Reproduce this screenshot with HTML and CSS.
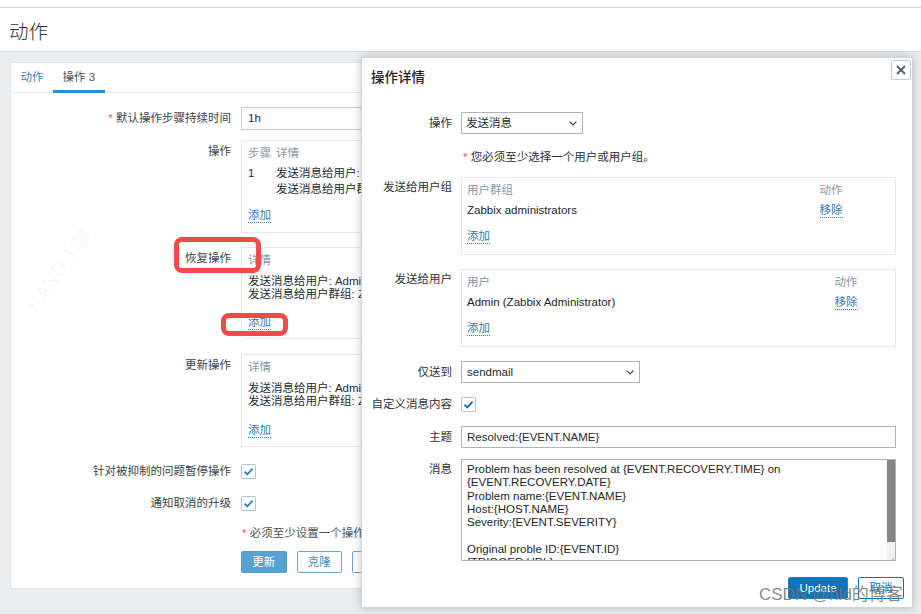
FILE: index.html
```html
<!DOCTYPE html>
<html lang="zh">
<head>
<meta charset="utf-8">
<title>动作</title>
<link rel="stylesheet" href="styles.css">
</head>
<body>
<div class="topbar"></div>
<header class="page-header"><h1>动作</h1></header>
<main class="content">
  <section class="panel">
    <nav class="tabs">
      <span class="tab">动作</span>
      <span class="tab active">操作 3</span>
    </nav>
    <div class="form">
      <div class="row r-input">
        <div class="label lbl-input"><span class="req">*</span> 默认操作步骤持续时间</div>
        <div class="field"><div class="input wide">1h</div></div>
      </div>
      <div class="row r-box1">
        <div class="label lbl-box">操作</div>
        <div class="field">
          <div class="box ops">
            <div class="thead"><span class="c-step">步骤</span><span>详情</span></div>
            <div class="trow ops-row"><span class="c-step">1</span>
              <div class="lines"><div>发送消息给用户: Admin (Zabbix Administrator) 通过 sendmail</div><div>发送消息给用户群组: Zabbix administrators 通过 sendmail</div></div>
            </div>
            <a class="link">添加</a>
          </div>
        </div>
      </div>
      <div class="row r-box2">
        <div class="label lbl-box">恢复操作</div>
        <div class="field">
          <div class="box rec">
            <div class="thead"><span>详情</span></div>
            <div class="lines tight"><div>发送消息给用户: Admin (Zabbix Administrator) 通过 sendmail</div><div>发送消息给用户群组: Zabbix administrators 通过 sendmail</div></div>
            <a class="link">添加</a>
          </div>
        </div>
      </div>
      <div class="row r-box3">
        <div class="label lbl-box">更新操作</div>
        <div class="field">
          <div class="box rec">
            <div class="thead"><span>详情</span></div>
            <div class="lines tight"><div>发送消息给用户: Admin (Zabbix Administrator) 通过 sendmail</div><div>发送消息给用户群组: Zabbix administrators 通过 sendmail</div></div>
            <a class="link">添加</a>
          </div>
        </div>
      </div>
      <div class="row r-cb1">
        <div class="label">针对被抑制的问题暂停操作</div>
        <div class="field"><span class="checkbox"><svg width="15" height="15" viewBox="0 0 15 15"><path d="M3.5 7.6 L6.3 10.3 L11.6 4.6" fill="none" stroke="#2f86c4" stroke-width="1.9"/></svg></span></div>
      </div>
      <div class="row r-cb2">
        <div class="label">通知取消的升级</div>
        <div class="field"><span class="checkbox"><svg width="15" height="15" viewBox="0 0 15 15"><path d="M3.5 7.6 L6.3 10.3 L11.6 4.6" fill="none" stroke="#2f86c4" stroke-width="1.9"/></svg></span></div>
      </div>
      <div class="row r-note">
        <div class="label"></div>
        <div class="field note"><span class="req">*</span> 必须至少设置一个操作。</div>
      </div>
      <div class="row r-btns">
        <div class="label"></div>
        <div class="field buttons">
          <span class="btn primary">更新</span>
          <span class="btn secondary">克隆</span>
          <span class="btn secondary">删除</span>
        </div>
      </div>
    </div>
  </section>
</main>

<div class="mark mark1">HAND-189</div>

<div class="annot annot1"></div>
<div class="annot annot2"></div>

<div class="modal">
  <div class="modal-head">操作详情</div>
  <span class="close"><svg width="20" height="20" viewBox="0 0 20 20"><path d="M6 6 L14 14 M14 6 L6 14" stroke="#5b6366" stroke-width="2" fill="none"/></svg></span>
  <div class="modal-body">
    <div class="mrow m-op">
      <div class="mlabel mid">操作</div>
      <div class="mfield">
        <div class="select s-op"><span>发送消息</span><svg width="8" height="5" viewBox="0 0 8 5"><polyline points="0.6,0.6 4,4 7.4,0.6" fill="none" stroke="#3a3f42" stroke-width="1.2"/></svg></div>
      </div>
    </div>
    <div class="mrow m-hint">
      <div class="mlabel"></div>
      <div class="mfield"><span class="req">*</span> 您必须至少选择一个用户或用户组。</div>
    </div>
    <div class="mrow m-box">
      <div class="mlabel top">发送给用户组</div>
      <div class="mfield">
        <div class="mbox">
          <div class="mhead"><span class="name">用户群组</span><span class="act">动作</span></div>
          <div class="mline"><span class="name">Zabbix administrators</span><span class="act"><a class="link">移除</a></span></div>
          <a class="link">添加</a>
        </div>
      </div>
    </div>
    <div class="mrow m-box">
      <div class="mlabel top">发送给用户</div>
      <div class="mfield">
        <div class="mbox">
          <div class="mhead"><span class="name">用户</span><span class="act narrow">动作</span></div>
          <div class="mline"><span class="name">Admin (Zabbix Administrator)</span><span class="act narrow"><a class="link">移除</a></span></div>
          <a class="link">添加</a>
        </div>
      </div>
    </div>
    <div class="mrow m-sel">
      <div class="mlabel mid">仅送到</div>
      <div class="mfield">
        <div class="select s-mail"><span>sendmail</span><svg width="8" height="5" viewBox="0 0 8 5"><polyline points="0.6,0.6 4,4 7.4,0.6" fill="none" stroke="#3a3f42" stroke-width="1.2"/></svg></div>
      </div>
    </div>
    <div class="mrow m-cb">
      <div class="mlabel cb">自定义消息内容</div>
      <div class="mfield"><span class="checkbox"><svg width="15" height="15" viewBox="0 0 15 15"><path d="M3.5 7.6 L6.3 10.3 L11.6 4.6" fill="none" stroke="#0b6fae" stroke-width="1.9"/></svg></span></div>
    </div>
    <div class="mrow m-subj">
      <div class="mlabel mid">主题</div>
      <div class="mfield"><div class="input full">Resolved:{EVENT.NAME}</div></div>
    </div>
    <div class="mrow m-msg">
      <div class="mlabel top">消息</div>
      <div class="mfield">
        <div class="textarea"><div class="ta-text">Problem has been resolved at {EVENT.RECOVERY.TIME} on
{EVENT.RECOVERY.DATE}
Problem name:{EVENT.NAME}
Host:{HOST.NAME}
Severity:{EVENT.SEVERITY}

Original proble ID:{EVENT.ID}
{TRIGGER.URL}</div>
          <div class="scrollbar"><div class="thumb"></div><div class="grip"><svg width="8" height="8" viewBox="0 0 8 8"><path d="M7 2 L2 7 M7 5 L5 7" stroke="#9a9a9a" stroke-width="0.8"/></svg></div></div>
        </div>
      </div>
    </div>
  </div>
  <div class="modal-foot">
    <span class="btn mprimary">Update</span>
    <span class="btn msecondary">取消</span>
  </div>
</div>

<div class="csdn">CSDN @hld的博客</div>
</body>
</html>
```

FILE: styles.css
```css
* { box-sizing: border-box; }
html, body { margin: 0; padding: 0; }
body {
  width: 921px;
  height: 614px;
  overflow: hidden;
  position: relative;
  background: #ebeef0;
  font-family: "Liberation Sans", Arial, "Noto Sans CJK SC", sans-serif;
  font-size: 11.5px;
  line-height: 16px;
  color: #1f2c33;
}
.topbar { height: 8px; background: #fff; border-bottom: 1px solid #d4d7d9; }
.page-header {
  height: 44px;
  background: #fff;
  border-bottom: 1px solid #d8dbdd;
  display: flex;
  align-items: center;
  padding: 2px 0 0 9px;
}
.page-header h1 {
  margin: 0;
  font-family: "Noto Sans CJK SC", sans-serif;
  font-size: 19.5px;
  font-weight: 300;
  color: #2a3236;
  line-height: 24px;
}
.content { padding: 10px 0 0 10px; }
.panel {
  width: 901px;
  height: 527px;
  background: #fff;
  border: 1px solid #e1e5e7;
}
.tabs {
  height: 30px;
  display: flex;
  border-bottom: 1px solid #e6eaec;
}
.tab {
  padding: 0 9.5px;
  line-height: 29px;
  color: #3d7fb3;
  height: 30px;
}
.tab.active {
  color: #4a5257;
  border-bottom: 3px solid #2f8fcf;
  line-height: 29px;
}
.form { padding-top: 14px; }
.row { display: flex; }
.label {
  width: 220px;
  flex: none;
  text-align: right;
  color: #3b4347;
}
.field {
  margin-left: 10px;
  flex: none;
  width: 128px;
  overflow: hidden;
  white-space: nowrap;
}
.lbl-input { padding-top: 3px; }
.lbl-box { padding-top: 3px; }
.req { color: #e66060; }
.r-input { margin-bottom: 10px; }
.r-box1 { margin-bottom: 14px; }
.r-box2 { margin-bottom: 15px; }
.r-box3 { margin-bottom: 17px; }
.r-cb1 { margin-bottom: 17px; align-items: center; height: 15px; }
.r-cb2 { margin-bottom: 14px; align-items: center; height: 15px; }
.r-note { margin-bottom: 10px; }
.note { color: #4a5257; padding-left: 1px; }
.input {
  height: 23px;
  border: 1px solid #bfcad0;
  padding: 0 6px;
  line-height: 21px;
  background: #fff;
  white-space: nowrap;
}
.input.wide { width: 660px; }
.box {
  width: 660px;
  border: 1px solid #e4e8ea;
  padding: 4px 6px 9px 6px;
  white-space: nowrap;
}
.box.rec { padding-bottom: 8px; }
.thead { color: #8797a0; display: flex; height: 16px; }
.c-step { width: 28px; flex: none; }
.trow { display: flex; }
.ops-row { margin-top: 4px; margin-bottom: 10px; }
.lines { color: #252c30; }
.lines.tight { line-height: 13.4px; margin-top: 6.5px; margin-bottom: 13px; }
.link {
  color: #3179b3;
  display: inline-block;
  line-height: 14px;
  border-bottom: 1px dotted #3179b3;
  height: 16px;
  padding-top: 1px;
}
.checkbox {
  display: block;
  width: 15px;
  height: 15px;
  border: 1px solid #b8c4ca;
  background: #fff;
  border-radius: 1px;
  position: relative;
}
.checkbox svg { position: absolute; left: -1px; top: -1px; }
.buttons { display: flex; gap: 10px; height: 23px; }
.btn {
  display: inline-flex;
  align-items: center;
  justify-content: center;
  height: 22.5px;
  width: 45.5px;
  flex: none;
  border-radius: 2px;
  font-size: 11.5px;
}
.btn.primary { background: #57a2d4; color: #fff; border: 1px solid #4f9bcd; }
.btn.secondary { background: #fff; color: #3f89c2; border: 1px solid #6aa6d2; }

/* watermark */
.mark {
  position: absolute;
  font-size: 20px;
  color: rgba(0, 0, 0, 0.04);
  transform: rotate(-55deg);
  white-space: nowrap;
  font-family: "Liberation Sans", sans-serif;
}
.mark1 { left: 10px; top: 262px; }

/* annotations */
.annot {
  position: absolute;
  border: 5px solid #f04a4a;
  border-radius: 8px;
}
.annot1 { left: 174px; top: 237px; width: 87px; height: 36px; }
.annot2 { left: 221px; top: 312.5px; width: 67px; height: 23px; }

/* modal */
.modal {
  position: absolute;
  left: 361px;
  top: 57px;
  width: 552px;
  height: 551px;
  background: #fff;
  border: 1px solid #cdd4d8;
  box-shadow: 0 0 9px rgba(0, 0, 0, 0.22);
  display: flex;
  flex-direction: column;
}
.modal-head {
  height: 40px;
  display: flex;
  align-items: center;
  padding-left: 9px;
  font-size: 13.5px;
  color: #1f2528;
  font-weight: 500;
  flex: none;
}
.close {
  position: absolute;
  top: 2px;
  right: 1px;
  width: 20px;
  height: 20px;
  border: 1px solid #b6cfe2;
  border-radius: 2px;
  background: #fff;
  display: block;
}
.close svg { position: absolute; left: -1px; top: -1px; }
.modal-body { padding-top: 14px; flex: 1; }
.mrow { display: flex; }
.mlabel {
  width: 90px;
  flex: none;
  text-align: right;
  color: #2b3236;
  white-space: nowrap;
}
.mlabel.mid { line-height: 22px; }
.mlabel.top { padding-top: 2px; }
.mlabel.cb { line-height: 15px; }
.mfield { margin-left: 9px; flex: none; width: 434.6px; }
.m-op { margin-bottom: 15px; }
.m-hint { margin-bottom: 12px; color: #2b3236; }
.m-hint .mfield { padding-left: 2px; }
.m-box { margin-bottom: 14px; }
.m-sel { margin-bottom: 14px; }
.m-cb { margin-bottom: 14px; height: 15px; }
.m-subj { margin-bottom: 11px; }
.select {
  height: 22px;
  border: 1px solid #aab6bc;
  display: flex;
  align-items: center;
  justify-content: space-between;
  padding: 0 5px 0 4px;
  background: #fff;
}
.s-op { width: 122px; }
.s-mail { width: 178.5px; padding-left: 5px; }
.mbox {
  border: 1px solid #e6eaec;
  height: 78px;
  padding: 3.5px 5px 0 5px;
}
.mhead { display: flex; color: #8797a0; height: 16px; margin-bottom: 4px; }
.mline { display: flex; height: 16px; margin-bottom: 10px; color: #1f2528; }
.name { flex: 1; }
.act { width: 70px; flex: none; }
.act.narrow { width: 55px; }
.input.full { width: 434.6px; height: 22px; line-height: 20px; padding-left: 5px; border-color: #aab6bc; }
.textarea {
  position: relative;
  height: 102px;
  border: 1px solid #aab6bc;
  overflow: hidden;
  background: #fff;
}
.ta-text {
  white-space: pre;
  line-height: 13.35px;
  padding: 3px 0 0 5px;
  color: #1f2528;
}
.scrollbar {
  position: absolute;
  right: 0;
  top: 0;
  width: 8px;
  height: 100px;
  background: #f1f1f1;
}
.thumb { height: 82px; background: #858585; }
.grip { position: absolute; right: 0; bottom: 0; width: 8px; height: 8px; }
.modal-foot {
  flex: none;
  display: flex;
  justify-content: flex-end;
  gap: 10px;
  padding: 0 8px 8px 0;
}
.btn.mprimary { width: 60px; background: #0b73b8; color: #fff; border: 1px solid #1f80c2; }
.btn.msecondary { width: 46px; background: #fff; color: #0b73b8; border: 1px solid #0b73b8; }

.csdn {
  position: absolute;
  left: 759px;
  top: 584px;
  font-family: "Liberation Sans", Arial, "Noto Sans CJK SC", sans-serif;
  font-size: 17px;
  line-height: 22px;
  color: rgba(115, 115, 115, 0.85);
  white-space: nowrap;
}
```
